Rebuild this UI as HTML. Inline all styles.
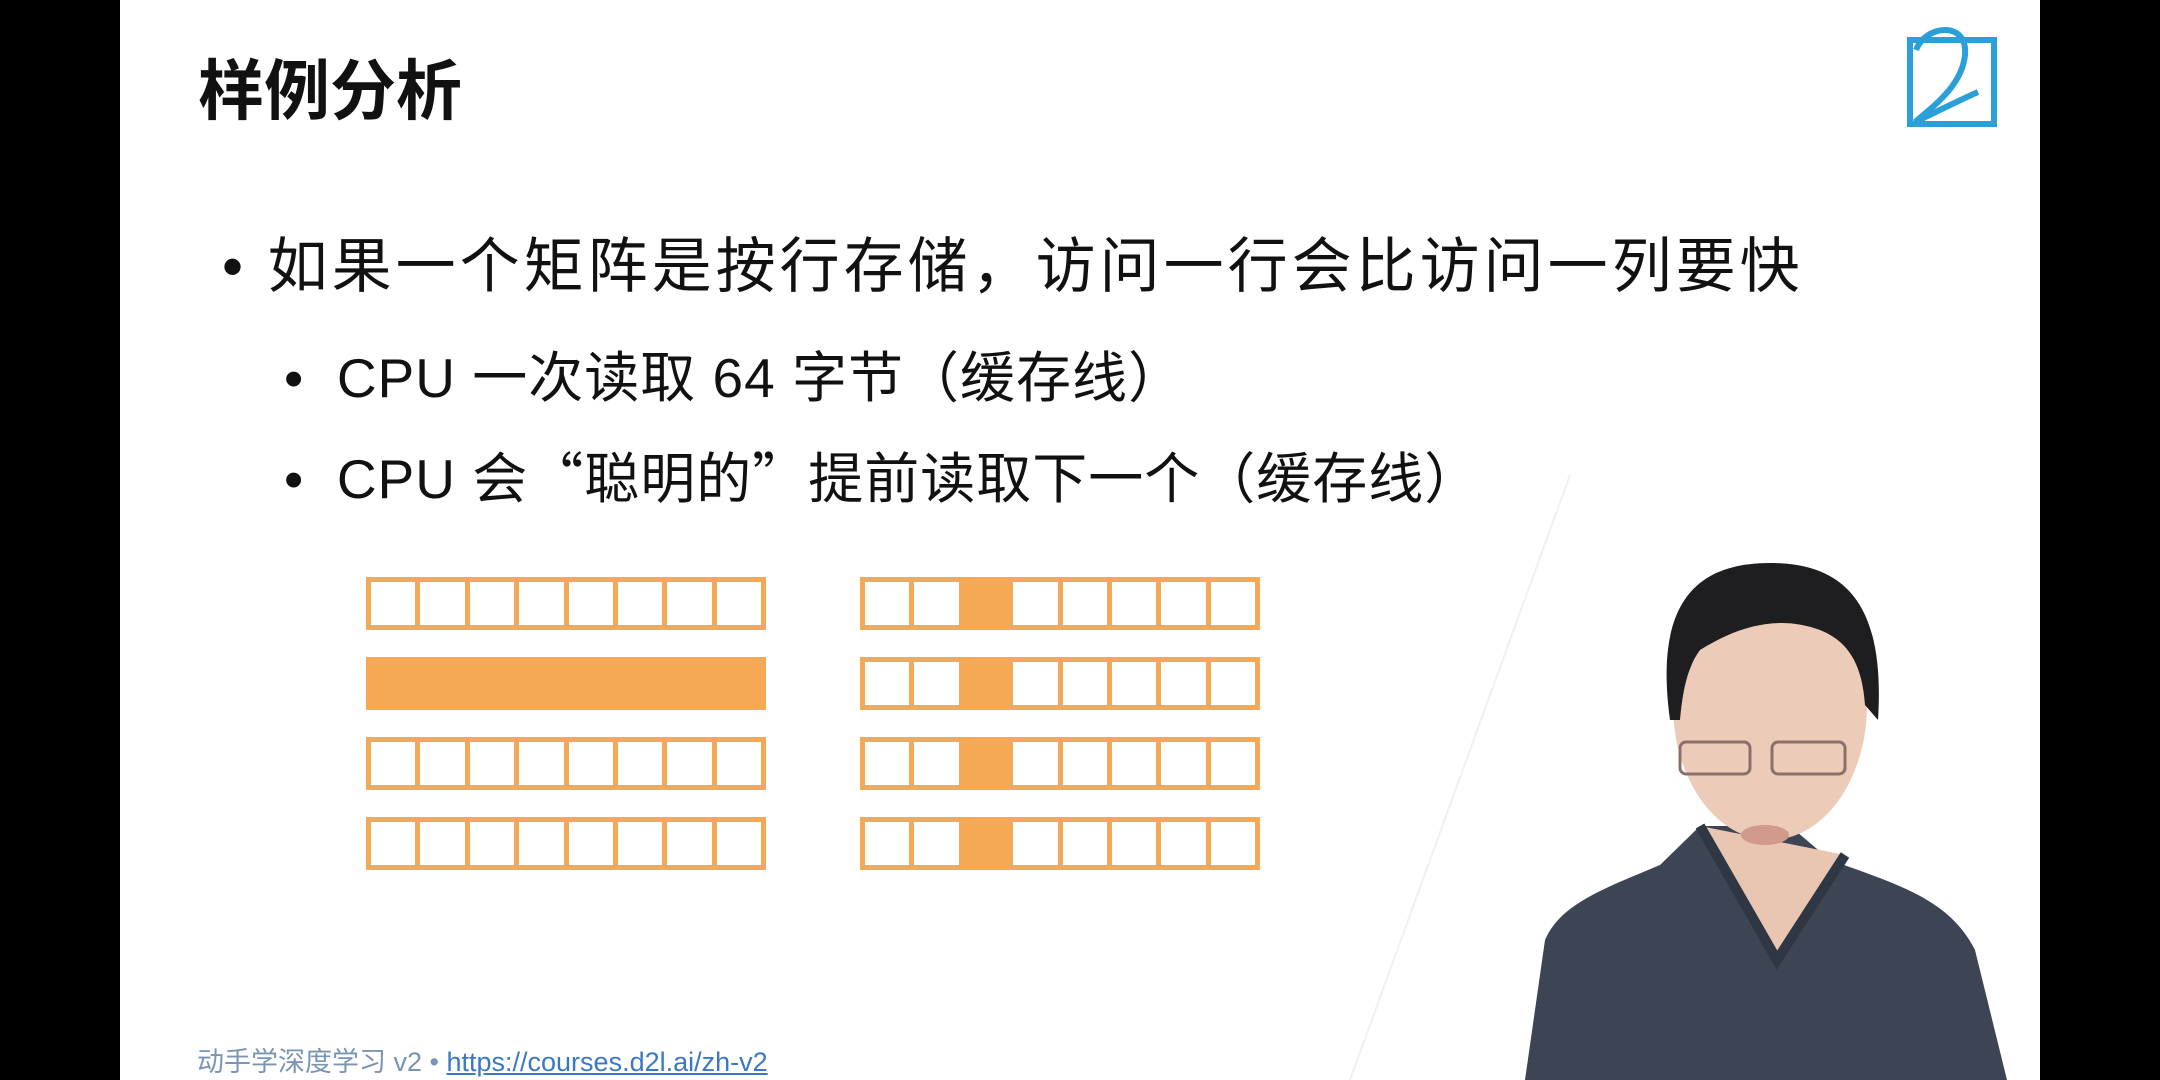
<!DOCTYPE html>
<html><head><meta charset="utf-8"><style>
body{margin:0;width:2160px;height:1080px;background:#000;overflow:hidden;position:relative;font-family:"Liberation Sans","Noto Sans CJK SC",sans-serif}
.slide{position:absolute;left:120px;top:0;width:1920px;height:1080px;background:#fff}
.t{position:absolute;white-space:nowrap;color:#111}
.q{font-family:"Noto Sans CJK SC",sans-serif}
.grid{position:absolute;display:flex;border:5px solid #f5a955;box-sizing:border-box;height:53px;width:400px}
.grid div{flex:1;border-left:5px solid #f5a955;background:#fff}
.grid div:first-child{border-left:none}
.grid div.f{background:#f5a955}
</style></head><body>
<div class="slide"></div>
<div class="t" style="left:198px;top:38px;font-size:66px;font-weight:bold;">样例分析</div>
<div class="t" style="left:222px;top:218px;font-size:60px;letter-spacing:4px;">•&nbsp;如果一个矩阵是按行存储，访问一行会比访问一列要快</div>
<div class="t" style="left:284px;top:333px;font-size:55px;letter-spacing:1px;">•&nbsp; CPU 一次读取 64 字节（缓存线）</div>
<div class="t" style="left:284px;top:434px;font-size:55px;letter-spacing:1px;">•&nbsp; CPU 会<span class="q">“</span>聪明的<span class="q">”</span>提前读取下一个（缓存线）</div>

<div class="grid" style="left:366px;top:577px"><div></div><div></div><div></div><div></div><div></div><div></div><div></div><div></div></div>
<div class="grid" style="left:366px;top:657px;background:#f5a955"><div class="f"></div><div class="f"></div><div class="f"></div><div class="f"></div><div class="f"></div><div class="f"></div><div class="f"></div><div class="f"></div></div>
<div class="grid" style="left:366px;top:737px"><div></div><div></div><div></div><div></div><div></div><div></div><div></div><div></div></div>
<div class="grid" style="left:366px;top:817px"><div></div><div></div><div></div><div></div><div></div><div></div><div></div><div></div></div>

<div class="grid" style="left:860px;top:577px"><div></div><div></div><div class="f"></div><div></div><div></div><div></div><div></div><div></div></div>
<div class="grid" style="left:860px;top:657px"><div></div><div></div><div class="f"></div><div></div><div></div><div></div><div></div><div></div></div>
<div class="grid" style="left:860px;top:737px"><div></div><div></div><div class="f"></div><div></div><div></div><div></div><div></div><div></div></div>
<div class="grid" style="left:860px;top:817px"><div></div><div></div><div class="f"></div><div></div><div></div><div></div><div></div><div></div></div>

<div class="t" style="left:197px;top:1040px;font-size:27px;color:#7a95b3;">动手学深度学习 v2 • <span style="color:#3b78c4;text-decoration:underline">https://courses.d2l.ai/zh-v2</span></div>

<svg style="position:absolute;left:0;top:0" width="2160" height="1080">
<line x1="1570" y1="475" x2="1350" y2="1080" stroke="#f0f0f0" stroke-width="2"/>
<rect x="1910" y="40" width="84" height="84" fill="none" stroke="#2a9fd8" stroke-width="6"/>
<path d="M1916 50 C1925 25 1968 20 1965 55 C1962 85 1935 105 1915 122 C1940 110 1960 100 1978 92" fill="none" stroke="#2a9fd8" stroke-width="6"/>
<!-- person -->
<path d="M1525 1080 L1545 940 C1560 905 1600 890 1660 865 L1700 826 L1790 826 L1830 860 C1900 885 1950 900 1975 950 L2007 1080 Z" fill="#3d4454"/>
<path d="M1700 826 L1777 960 L1845 855 Z" fill="#e8c6b2"/>
<path d="M1700 826 L1777 960 L1845 855" fill="none" stroke="#2f3644" stroke-width="10"/>
<ellipse cx="1770" cy="705" rx="97" ry="135" fill="#eccbb8"/>
<path d="M1670 720 C1655 610 1690 563 1770 563 C1850 563 1885 610 1878 720 L1865 705 C1862 660 1845 640 1820 630 C1780 615 1740 625 1700 650 C1685 670 1682 700 1680 720 Z" fill="#1e1d1f"/>
<rect x="1680" y="742" width="70" height="32" rx="6" fill="none" stroke="#8a7068" stroke-width="3"/>
<rect x="1772" y="742" width="73" height="32" rx="6" fill="none" stroke="#8a7068" stroke-width="3"/>
<ellipse cx="1765" cy="835" rx="24" ry="10" fill="#d19a8c"/>
</svg>
</body></html>
